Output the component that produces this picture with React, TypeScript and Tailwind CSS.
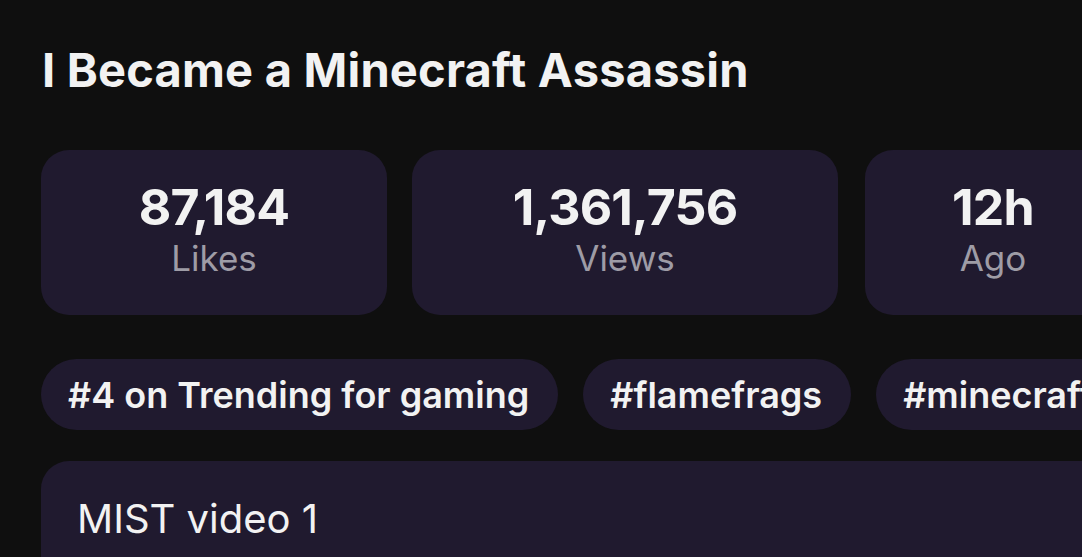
import React from "react";

const font = { fontFamily: "Inter, 'Noto Sans', sans-serif" };

function Stat({ value, label, w }: { value: string; label: string; w: string }) {
  return (
    <div className={`${w} h-[165px] shrink-0 rounded-[28px] bg-[#201a2f] flex flex-col items-center justify-center pb-[8px]`}>
      <div className="text-[50px] leading-[56px] font-bold text-[#f2f2f2] tracking-[-0.8px]">{value}</div>
      <div className="text-[35px] leading-[42px] text-[#9e9ca6] mt-[2px]">{label}</div>
    </div>
  );
}

function Chip({ text }: { text: string }) {
  return (
    <div className="h-[71px] shrink-0 rounded-full bg-[#201a2f] pl-[27px] pr-[29px] flex items-center text-[36px] font-semibold text-[#f2f2f2] whitespace-nowrap">
      {text}
    </div>
  );
}

export default function App() {
  return (
    <div className="w-[1082px] h-[557px] overflow-hidden bg-[#0f0f0f]" style={font}>
      <div className="pl-[41px] pt-[40px]">
        <h1 className="text-[47px] leading-[60px] font-bold text-[#f2f2f2] pl-[1px] tracking-[0.2px]">I Became a Minecraft Assassin</h1>
        <div className="mt-[50px] flex gap-[25px]">
          <Stat value="87,184" label="Likes" w="w-[346px]" />
          <Stat value="1,361,756" label="Views" w="w-[426px]" />
          <div className="ml-[2px] flex">
            <Stat value="12h" label="Ago" w="w-[256px]" />
          </div>
        </div>
        <div className="mt-[44px] flex gap-[25px]">
          <Chip text="#4 on Trending for gaming" />
          <Chip text="#flamefrags" />
          <Chip text="#minecraft" />
        </div>
        <div className="mt-[31px] w-[1100px] h-[200px] rounded-[28px] bg-[#201a2f] px-[36px] pt-[34px]">
          <div className="text-[40px] leading-[48px] text-[#f2f2f2]">MIST video 1</div>
        </div>
      </div>
    </div>
  );
}
